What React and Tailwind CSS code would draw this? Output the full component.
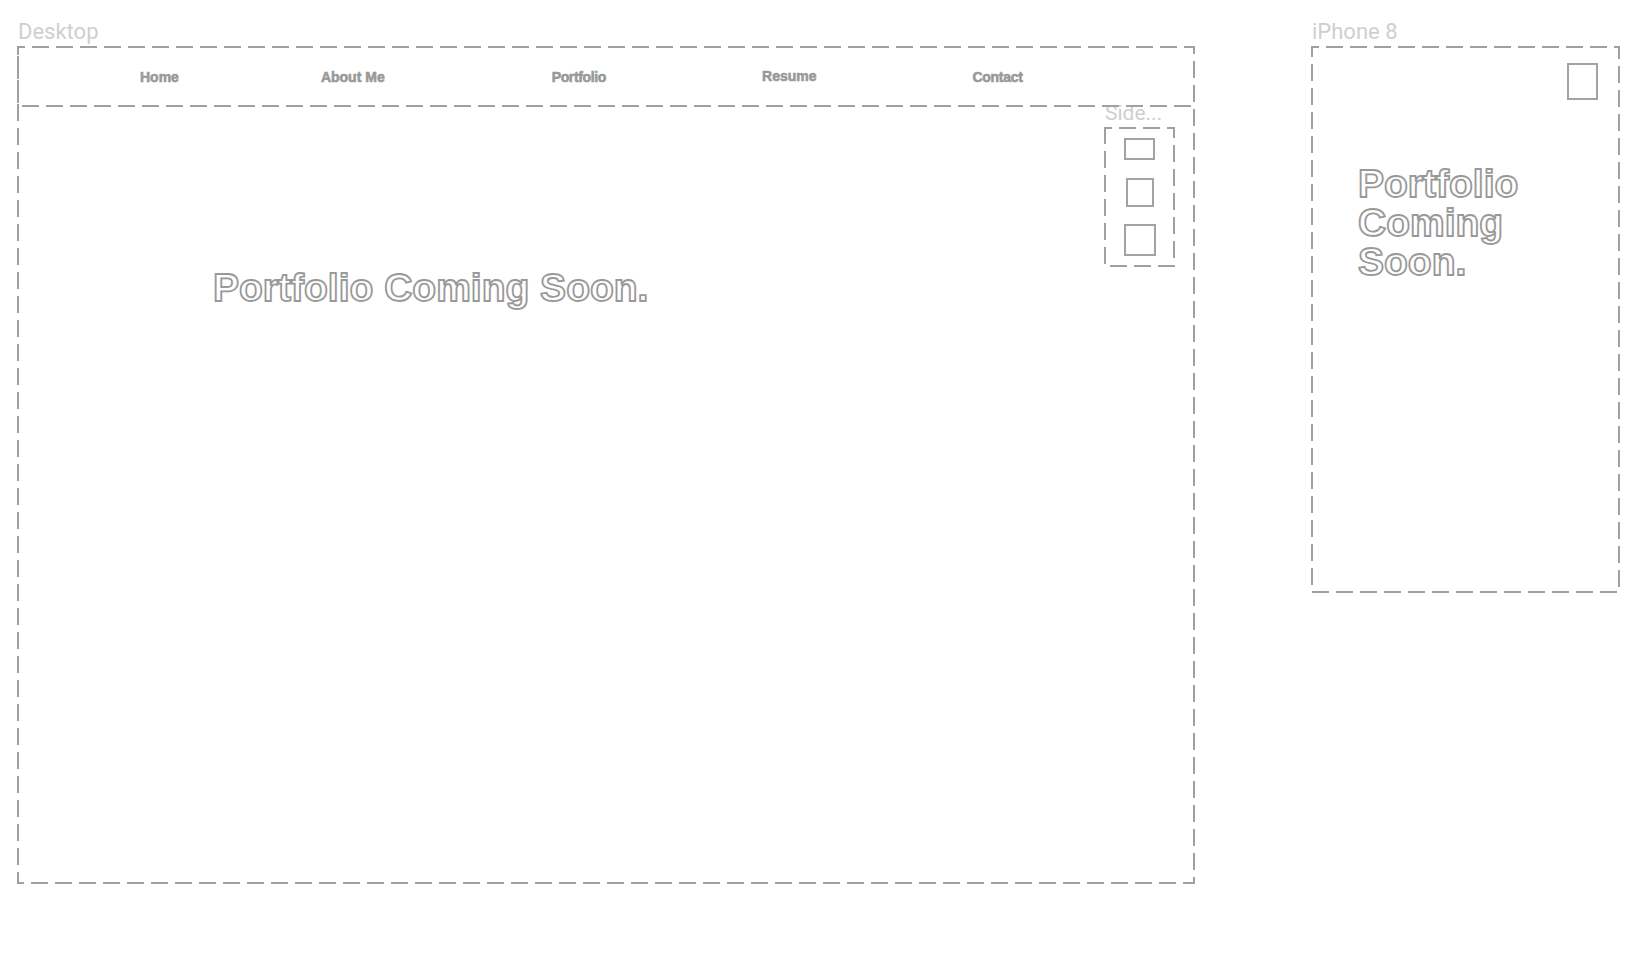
function DashedBox({ className = "", children }) {
  return (
    <div className={`relative ${className}`}>
      <svg className="absolute inset-0 w-full h-full pointer-events-none overflow-visible" aria-hidden="true">
        <rect x="0" y="0" width="100%" height="100%" fill="none" stroke="#a0a0a0" strokeWidth="2" strokeDasharray="17 7" strokeDashoffset="10" />
      </svg>
      {children}
    </div>
  );
}

function Label({ children, className = "text-[22px]" }) {
  return (
    <div className={`h-[27px] font-['Roboto',sans-serif] leading-[24px] text-[#cfcfcf] ${className}`}>{children}</div>
  );
}

function NavItem({ children, className = "" }) {
  return (
    <span className={`font-['Liberation_Sans',sans-serif] font-bold text-[14px] leading-[16px] text-[#999999] [-webkit-text-stroke:0.6px_#999999] ${className}`}>
      {children}
    </span>
  );
}

function Square({ className = "" }) {
  return <div className={`border-2 border-[#a3a3a3] ${className}`} />;
}

const heading = "font-['Liberation_Sans',sans-serif] font-bold text-[39px] leading-[39px] text-white [-webkit-text-stroke:1.8px_#999999]";

export default function App() {
  return (
    <div className="w-[1652px] h-[958px] bg-white flex items-start pl-[18px] pt-[20px] overflow-hidden">
      <div className="w-[1176px] shrink-0">
        <Label>Desktop</Label>
        <DashedBox className="h-[836px]">
          <DashedBox className="h-[59px] flex items-center">
            <NavItem className="ml-[122px]">Home</NavItem>
            <NavItem className="ml-[142px]">About Me</NavItem>
            <NavItem className="ml-[167px] tracking-[-0.35px]">Portfolio</NavItem>
            <NavItem className="ml-[156px] -mt-[1px]">Resume</NavItem>
            <NavItem className="ml-[156px] tracking-[-0.3px]">Contact</NavItem>
          </DashedBox>
          <div className="flex justify-between items-start">
            <h1 className={`${heading} ml-[195px] mt-[162px] whitespace-nowrap`}>Portfolio Coming Soon.</h1>
            <div className="mr-[20px] -mt-[5px] w-[69px]">
              <Label className="text-[21px]">Side...</Label>
              <DashedBox className="h-[138px] flex flex-col items-center pt-[10px]">
                <Square className="w-[31px] h-[22px]" />
                <Square className="w-[28px] h-[29px] mt-[18px]" />
                <Square className="w-[32px] h-[32px] mt-[17px]" />
              </DashedBox>
            </div>
          </div>
        </DashedBox>
      </div>
      <div className="w-[307px] shrink-0 ml-[118px]">
        <Label>iPhone 8</Label>
        <DashedBox className="h-[545px] flex flex-col">
          <Square className="w-[31px] h-[37px] self-end mt-[16px] mr-[21px]" />
          <h1 className={`${heading} ml-[46px] mt-[64px] w-[200px]`}>Portfolio Coming Soon.</h1>
        </DashedBox>
      </div>
    </div>
  );
}
